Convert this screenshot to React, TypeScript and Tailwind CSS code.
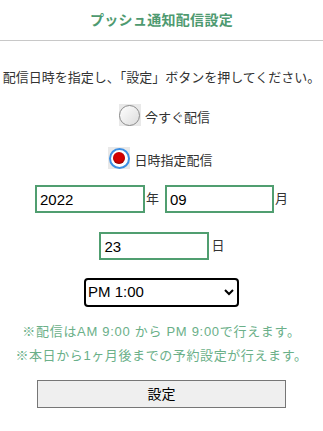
import React, { useState } from "react";

const font = "font-['Liberation_Sans','Noto_Sans_CJK_JP',sans-serif]";

const Radio = ({ checked }: { checked: boolean }) => (
  <span className="flex h-[22px] w-[22px] items-center justify-center bg-[#e9e9e9]">
    {checked ? (
      <span className="flex h-[21px] w-[21px] items-center justify-center rounded-full border-2 border-[#3d8fe3] bg-white">
        <span className="h-[12px] w-[12px] rounded-full bg-[#d40000] shadow-[inset_0_-1px_2px_rgba(0,0,0,0.35)]" />
      </span>
    ) : (
      <span className="h-[21px] w-[21px] rounded-full border border-[#8a8a8a] bg-gradient-to-br from-white to-[#dcdcdc]" />
    )}
  </span>
);

const App = () => {
  const [now, setNow] = useState(false);
  return (
    <div className={`w-[323px] h-[431px] bg-white text-[#222] ${font}`}>
      <div className="flex h-[41px] items-center justify-center border-b border-[#c8c8c8]">
        <h1 className="text-[14px] font-bold tracking-[0.3px] text-[#4e9a70]">
          プッシュ通知配信設定
        </h1>
      </div>
      <div className="flex flex-col items-center">
        <p className="mt-[27px] text-[13px] leading-[20px] text-[#333]">
          配信日時を指定し、「設定」ボタンを押してください。
        </p>
        <label
          className="mt-[16px] flex items-end gap-[4px] pl-[6px]"
          onClick={() => setNow(true)}
        >
          <Radio checked={now} />
          <span className="text-[13px] leading-[16px] text-[#333]">今すぐ配信</span>
        </label>
        <label
          className="mt-[21px] flex items-end gap-[4px] pr-[2px]"
          onClick={() => setNow(false)}
        >
          <Radio checked={!now} />
          <span className="text-[13px] leading-[16px] text-[#333]">日時指定配信</span>
        </label>
        <div className="mt-[16px] flex items-center text-[13px] text-[#333]">
          <input
            defaultValue="2022"
            className="h-[28px] w-[110px] border-2 border-[#509e70] px-[3px] text-[15px] text-black outline-none"
          />
          <span className="ml-[1px] mr-[6px]">年</span>
          <input
            defaultValue="09"
            className="h-[28px] w-[109px] border-2 border-[#509e70] px-[3px] text-[15px] text-black outline-none"
          />
          <span className="ml-[1px]">月</span>
        </div>
        <div className="mt-[19px] flex items-center pl-[1px] text-[13px] text-[#333]">
          <input
            defaultValue="23"
            className="h-[28px] w-[110px] border-2 border-[#509e70] px-[3px] text-[15px] text-black outline-none"
          />
          <span className="ml-[2px]">日</span>
        </div>
        <div className="relative mt-[18px]">
          <select
            defaultValue="13"
            className="h-[29px] w-[155px] appearance-none rounded-[4px] border-2 border-black bg-white pl-[2px] text-[15px] text-black outline-none"
          >
            <option value="9">AM 9:00</option>
            <option value="13">PM 1:00</option>
            <option value="21">PM 9:00</option>
          </select>
          <svg
            className="pointer-events-none absolute right-[5px] top-[10px]"
            width="10"
            height="8"
            viewBox="0 0 10 8"
          >
            <path d="M1 2 L5 6 L9 2" fill="none" stroke="#000" strokeWidth="2" />
          </svg>
        </div>
        <p className="mt-[13px] text-[13px] leading-[24px] tracking-[0.7px] text-[#6bb089]">
          ※配信はAM 9:00 から PM 9:00で行えます。
        </p>
        <p className="text-[13px] leading-[24px] tracking-[0.6px] text-[#6bb089]">
          ※本日から1ヶ月後までの予約設定が行えます。
        </p>
        <button className="mt-[12px] h-[28px] w-[249px] border border-[#767676] bg-[#efefef] text-[14px] text-black">
          設定
        </button>
      </div>
    </div>
  );
};

export default App;
